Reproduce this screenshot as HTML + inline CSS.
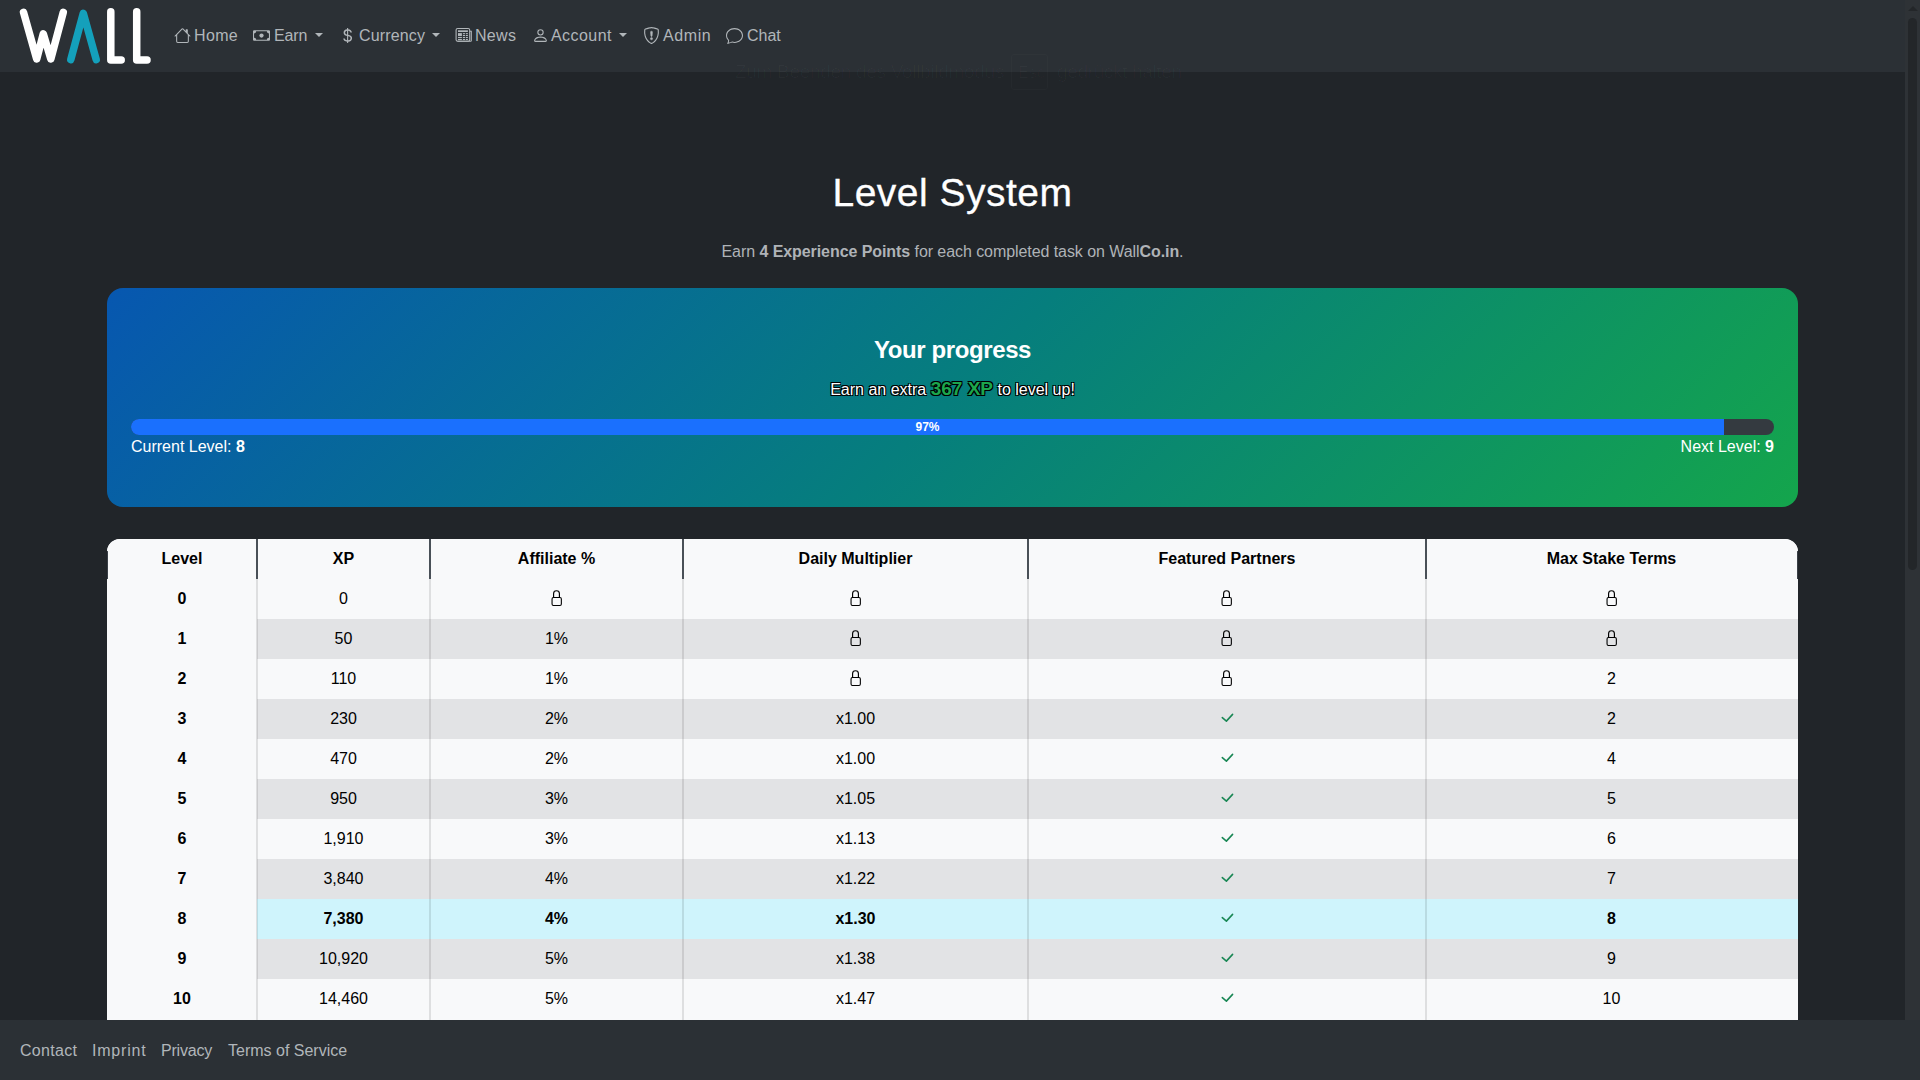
<!DOCTYPE html>
<html><head><meta charset="utf-8"><title>Level System</title>
<style>
*{box-sizing:border-box;margin:0;padding:0}
html,body{width:1920px;height:1080px;overflow:hidden;background:#212529;font-family:"Liberation Sans",sans-serif;color:#dee2e6}
.abs{position:absolute}
#nav{position:absolute;left:0;top:0;width:1905px;height:72px;background:#2b3035}
.nl{position:absolute;top:0;height:72px;line-height:72px;font-size:16px;color:#b1b6ba;white-space:nowrap}
.nl svg{position:absolute;fill:#b1b6ba}
.caret{position:absolute;width:0;height:0;border-left:4px solid transparent;border-right:4px solid transparent;border-top:4.5px solid #b1b6ba}
#title{position:absolute;left:0;width:1905px;top:167px;text-align:center;font-size:39px;line-height:52px;color:#fff;letter-spacing:0.5px;-webkit-text-stroke:0.3px #fff}
#sub{position:absolute;left:0;width:1905px;top:241px;text-align:center;font-size:16px;letter-spacing:-0.07px;line-height:22px;color:#afb3b7}
#sub b{font-weight:bold}
#card{position:absolute;left:107px;top:288px;width:1691px;height:219px;border-radius:16px;
 background:linear-gradient(135deg,#0757b0 0%,#067e7d 50%,#14a54c 100%)}
#yp{position:absolute;left:0;width:100%;top:47px;letter-spacing:-0.4px;text-align:center;font-size:24px;line-height:30px;font-weight:bold;color:#fff}
#ex{position:absolute;left:0;width:100%;top:90px;text-align:center;font-size:16px;line-height:22px;color:#fff;
 text-shadow:-1px -1px 0 #000,1px -1px 0 #000,-1px 1px 0 #000,1px 1px 0 #000}
#ex b{color:#1ca64c;font-size:19px}
#bar{position:absolute;left:24px;top:131px;width:1643px;height:16px;border-radius:8px;background:#343a40;overflow:hidden}
#fill{position:absolute;left:0;top:0;height:16px;width:1593px;background:#1a70fe;color:#fff;font-size:12px;font-weight:bold;text-align:center;line-height:16px}
#cur{position:absolute;left:24px;top:148px;font-size:16px;line-height:22px;color:#fff}
#nxt{position:absolute;right:24px;top:148px;font-size:16px;line-height:22px;color:#fff}
#tbl{position:absolute;left:107px;top:539px;width:1691px;height:520px;background:#f8f9fa;border-radius:13px 13px 0 0;overflow:hidden;color:#000}
.hd{position:absolute;left:0;top:0;width:1691px;height:40px;background:#f8f9fa;font-weight:bold;font-size:16px}
.row{position:absolute;left:0;width:1691px;height:40px;background:#f8f9fa;font-size:16px}
.row.st{background:#e2e3e5}
.row.hl{background:#cff4fc;font-weight:bold}
.c{position:absolute;top:0;height:40px;line-height:40px;text-align:center;white-space:nowrap}
.c.lv{background:#f8f9fa;font-weight:bold}
.c svg.lk{position:absolute;left:calc(50% - 6px);top:11px}
.c svg.ck{position:absolute;left:calc(50% - 6px);top:13.5px}
.hb{position:absolute;top:0;width:2px;height:40px;background:#495057}
.bb{position:absolute;top:0;width:2px;height:480px;background:rgba(0,0,0,0.1)}
#foot{position:absolute;left:0;top:1020px;width:1920px;z-index:5;height:60px;background:#2b3035}
.fl{position:absolute;top:1px;line-height:60px;font-size:16px;color:#b1b6ba}
#sb{position:absolute;left:1905px;top:0;width:15px;height:1020px;background:#2e3236}
#arr{position:absolute;left:2.5px;top:5.5px;width:0;height:0;border-left:5px solid transparent;border-right:5px solid transparent;border-bottom:5.5px solid #232629}
#thumb{position:absolute;left:3px;top:18px;width:9px;height:552px;border-radius:5px;background:#232629}
</style></head><body>
<div id="nav">
 <svg class="abs" style="left:16px;top:6px" width="140" height="62" viewBox="0 0 140 62">
  <g fill="none" stroke-linecap="round" stroke-linejoin="round" stroke-width="7.5">
   <path d="M7.5 6.3 L20.7 53 L27.3 27.8 L34.8 53 L47.3 6.3" stroke="#fff"/>
   <path d="M54.8 53.6 L67.3 7.3 L80.2 53.6" stroke="#14a0bb"/>
   <path d="M94.8 5.7 V54 H105.2" stroke="#fff"/>
   <path d="M120.7 5.7 V54 H131" stroke="#fff"/>
  </g>
 </svg>
 <div class="nl" style="left:174px">
  <svg style="left:0;top:26.5px" width="17" height="17" viewBox="0 0 16 16"><path d="M8.707 1.5a1 1 0 0 0-1.414 0L.646 8.146a.5.5 0 0 0 .708.708L2 8.207V13.5A1.5 1.5 0 0 0 3.5 15h9a1.5 1.5 0 0 0 1.5-1.5V8.207l.646.647a.5.5 0 0 0 .708-.708L13 5.793V2.5a.5.5 0 0 0-.5-.5h-1a.5.5 0 0 0-.5.5v1.293zM13 7.207V13.5a.5.5 0 0 1-.5.5h-9a.5.5 0 0 1-.5-.5V7.207l5-5z"/></svg>
  <span style="position:absolute;left:20px;letter-spacing:0.35px">Home</span>
 </div>
 <div class="nl" style="left:253px">
  <svg style="left:0;top:26.5px" width="17" height="17" viewBox="0 0 16 16"><path d="M8 10a2 2 0 1 0 0-4 2 2 0 0 0 0 4"/><path d="M0 4a1 1 0 0 1 1-1h14a1 1 0 0 1 1 1v8a1 1 0 0 1-1 1H1a1 1 0 0 1-1-1zm3 0a2 2 0 0 1-2 2v4a2 2 0 0 1 2 2h10a2 2 0 0 1 2-2V6a2 2 0 0 1-2-2z"/></svg>
  <span style="position:absolute;left:21px;letter-spacing:-0.1px">Earn</span>
  <div class="caret" style="left:62px;top:33px"></div>
 </div>
 <div class="nl" style="left:339px">
  <svg style="left:0;top:26.5px" width="17" height="17" viewBox="0 0 16 16"><path d="M4 10.781c.148 1.667 1.513 2.85 3.591 3.003V15h1.043v-1.216c2.27-.179 3.678-1.438 3.678-3.3 0-1.59-.947-2.51-2.956-3.028l-.722-.187V3.467c1.122.11 1.879.714 2.07 1.616h1.47c-.166-1.6-1.54-2.748-3.54-2.875V1H7.591v1.233c-1.939.23-3.27 1.472-3.27 3.156 0 1.454.966 2.483 2.661 2.917l.61.162v4.031c-1.149-.17-1.94-.8-2.131-1.718zm3.391-3.836c-1.043-.263-1.6-.825-1.6-1.616 0-.944.704-1.641 1.8-1.828v3.495l-.2-.05zm1.591 1.872c1.287.323 1.852.859 1.852 1.769 0 1.097-.826 1.828-2.2 1.939V8.73z"/></svg>
  <span style="position:absolute;left:20px;letter-spacing:0.15px">Currency</span>
  <div class="caret" style="left:93px;top:33px"></div>
 </div>
 <div class="nl" style="left:455px">
  <svg style="left:0;top:27px" width="17" height="17" viewBox="0 0 17 17"><g fill="none" stroke="#b1b6ba" stroke-width="1.1"><rect x="1.1" y="1.5" width="13.6" height="12.8" rx="1.6"/><path d="M14.7 4.2H16.3V13.5a0.8 0.8 0 0 1-0.8 0.8H2.5"/></g><g fill="#b1b6ba"><rect x="3" y="3.3" width="9.9" height="1.7"/><rect x="3" y="6.1" width="3.9" height="3"/><rect x="7.9" y="6.1" width="2.1" height="1.1"/><rect x="10.8" y="6.1" width="2.1" height="1.1"/><rect x="7.9" y="8" width="2.1" height="1.1"/><rect x="10.8" y="8" width="2.1" height="1.1"/><rect x="3" y="10" width="3.9" height="1.1"/><rect x="7.9" y="10" width="2.1" height="1.1"/><rect x="10.8" y="10" width="2.1" height="1.1"/><rect x="3" y="12" width="3.9" height="1.1"/><rect x="7.9" y="12" width="2.1" height="1.1"/><rect x="10.8" y="12" width="2.1" height="1.1"/></g></svg>
  <span style="position:absolute;left:20px;letter-spacing:0.3px">News</span>
 </div>
 <div class="nl" style="left:532px">
  <svg style="left:0;top:26.5px" width="17" height="17" viewBox="0 0 16 16"><path d="M8 8a3 3 0 1 0 0-6 3 3 0 0 0 0 6m2-3a2 2 0 1 1-4 0 2 2 0 0 1 4 0m4 8c0 1-1 1-1 1H3s-1 0-1-1 1-4 6-4 6 3 6 4m-1-.004c-.001-.246-.154-.986-.832-1.664C11.516 10.68 10.289 10 8 10s-3.516.68-4.168 1.332c-.678.678-.83 1.418-.832 1.664z"/></svg>
  <span style="position:absolute;left:19px;letter-spacing:0.45px">Account</span>
  <div class="caret" style="left:87px;top:33px"></div>
 </div>
 <div class="nl" style="left:643px">
  <svg style="left:0;top:26.5px" width="17" height="17" viewBox="0 0 16 16"><path d="M5.338 1.59a61 61 0 0 0-2.837.856.48.48 0 0 0-.328.39c-.554 4.157.726 7.19 2.253 9.188a10.7 10.7 0 0 0 2.287 2.233c.346.244.652.42.893.533q.18.085.293.118a1 1 0 0 0 .101.025 1 1 0 0 0 .1-.025q.114-.034.294-.118c.24-.113.547-.29.893-.533a10.7 10.7 0 0 0 2.287-2.233c1.527-1.997 2.807-5.031 2.253-9.188a.48.48 0 0 0-.328-.39c-.651-.213-1.75-.56-2.837-.855C9.552 1.290 8.531 1.067 8 1.067c-.53 0-1.552.223-2.662.524zM5.072.56C6.157.265 7.310 0 8 0s1.843.265 2.928.56c1.110.3 2.229.655 2.887.87a1.54 1.54 0 0 1 1.044 1.262c.596 4.477-.787 7.795-2.465 9.990a11.8 11.8 0 0 1-2.517 2.453 7 7 0 0 1-1.048.625c-.28.132-.581.24-.829.24s-.548-.108-.829-.24a7 7 0 0 1-1.048-.625 11.8 11.8 0 0 1-2.517-2.453C1.928 10.487.545 7.169 1.141 2.692A1.54 1.54 0 0 1 2.185 1.43 63 63 0 0 1 5.072.56"/><path d="M7.001 11a1 1 0 1 1 2 0 1 1 0 0 1-2 0M7.1 4.995a.905.905 0 1 1 1.8 0l-.35 3.507a.553.553 0 0 1-1.100 0z" stroke="#b1b6ba" stroke-width="0.5"/></svg>
  <span style="position:absolute;left:20px;letter-spacing:0.6px">Admin</span>
 </div>
 <div class="nl" style="left:726px">
  <svg style="left:0;top:26.5px" width="17" height="17" viewBox="0 0 16 16"><path d="M2.678 11.894a1 1 0 0 1 .287.801 11 11 0 0 1-.398 2c1.395-.323 2.247-.697 2.634-.893a1 1 0 0 1 .71-.074A8 8 0 0 0 8 14c3.996 0 7-2.807 7-6s-3.004-6-7-6-7 2.808-7 6c0 1.468.617 2.830 1.678 3.894m-.493 3.905a22 22 0 0 1-.713.129c-.2.032-.352-.176-.273-.362a10 10 0 0 0 .244-.637l.003-.010c.248-.72.45-1.548.524-2.319C.743 11.370 0 9.760 0 8c0-3.866 3.582-7 8-7s8 3.134 8 7-3.582 7-8 7a9 9 0 0 1-2.347-.306c-.52.263-1.639.742-3.468 1.105"/></svg>
  <span style="position:absolute;left:21px;letter-spacing:0px">Chat</span>
 </div>
</div>

<div style="position:absolute;left:0;top:0;width:1905px;height:100px;pointer-events:none;color:rgba(255,255,255,0.028);font-size:19px;line-height:22px;white-space:nowrap">
 <span id="fs1" style="position:absolute;left:735px;top:61px;letter-spacing:-0.3px">Zum Beenden des Vollbildmodus</span>
 <span style="position:absolute;left:1011px;top:54px;width:37px;height:36px;border:1px solid rgba(255,255,255,0.02);border-radius:3px"></span>
 <span id="fs2" style="position:absolute;left:1018px;top:62px;font-size:16px">Esc</span>
 <span id="fs3" style="position:absolute;left:1057px;top:61px;letter-spacing:-0.35px">gedrückt halten</span>
</div>
<div id="title">Level System</div>
<div id="sub">Earn <b>4 Experience Points</b> for each completed task on Wall<b>Co.in</b>.</div>

<div id="card">
 <div id="yp">Your progress</div>
 <div id="ex">Earn an extra <b>367 XP</b> to level up!</div>
 <div id="bar"><div id="fill">97%</div></div>
 <div id="cur">Current Level: <b>8</b></div>
 <div id="nxt">Next Level: <b>9</b></div>
</div>

<div id="tbl">
 <div class="hd"><div class="c" style="left:0px;width:150px">Level</div><div class="c" style="left:151px;width:171px">XP</div><div class="c" style="left:324px;width:251px">Affiliate %</div><div class="c" style="left:577px;width:343px">Daily Multiplier</div><div class="c" style="left:922px;width:396px">Featured Partners</div><div class="c" style="left:1320px;width:369px">Max Stake Terms</div><div class="hb" style="left:149px"></div><div class="hb" style="left:322px"></div><div class="hb" style="left:575px"></div><div class="hb" style="left:920px"></div><div class="hb" style="left:1318px"></div><div style="position:absolute;left:0;top:12px;width:1px;height:28px;background:#3a4047"></div><div style="position:absolute;right:0;top:12px;width:1px;height:28px;background:#3a4047"></div></div>
 <div style="position:absolute;left:0;top:40px;width:1691px;height:480px"><div class="row" style="top:0px"><div class="c lv" style="left:0px;width:150px">0</div><div class="c" style="left:151px;width:171px">0</div><div class="c" style="left:324px;width:251px"><svg class="lk" width="12" height="17" viewBox="0 0 12 17"><path d="M2.6 7.6V3.6a2.9 2.9 0 0 1 5.8 0V7.6" fill="none" stroke="#000" stroke-width="1.15"/><rect x="1.05" y="7.5" width="9.3" height="8" rx="1.4" fill="none" stroke="#000" stroke-width="1.1"/></svg></div><div class="c" style="left:577px;width:343px"><svg class="lk" width="12" height="17" viewBox="0 0 12 17"><path d="M2.6 7.6V3.6a2.9 2.9 0 0 1 5.8 0V7.6" fill="none" stroke="#000" stroke-width="1.15"/><rect x="1.05" y="7.5" width="9.3" height="8" rx="1.4" fill="none" stroke="#000" stroke-width="1.1"/></svg></div><div class="c" style="left:922px;width:396px"><svg class="lk" width="12" height="17" viewBox="0 0 12 17"><path d="M2.6 7.6V3.6a2.9 2.9 0 0 1 5.8 0V7.6" fill="none" stroke="#000" stroke-width="1.15"/><rect x="1.05" y="7.5" width="9.3" height="8" rx="1.4" fill="none" stroke="#000" stroke-width="1.1"/></svg></div><div class="c" style="left:1320px;width:369px"><svg class="lk" width="12" height="17" viewBox="0 0 12 17"><path d="M2.6 7.6V3.6a2.9 2.9 0 0 1 5.8 0V7.6" fill="none" stroke="#000" stroke-width="1.15"/><rect x="1.05" y="7.5" width="9.3" height="8" rx="1.4" fill="none" stroke="#000" stroke-width="1.1"/></svg></div></div>
<div class="row st" style="top:40px"><div class="c lv" style="left:0px;width:150px">1</div><div class="c" style="left:151px;width:171px">50</div><div class="c" style="left:324px;width:251px">1%</div><div class="c" style="left:577px;width:343px"><svg class="lk" width="12" height="17" viewBox="0 0 12 17"><path d="M2.6 7.6V3.6a2.9 2.9 0 0 1 5.8 0V7.6" fill="none" stroke="#000" stroke-width="1.15"/><rect x="1.05" y="7.5" width="9.3" height="8" rx="1.4" fill="none" stroke="#000" stroke-width="1.1"/></svg></div><div class="c" style="left:922px;width:396px"><svg class="lk" width="12" height="17" viewBox="0 0 12 17"><path d="M2.6 7.6V3.6a2.9 2.9 0 0 1 5.8 0V7.6" fill="none" stroke="#000" stroke-width="1.15"/><rect x="1.05" y="7.5" width="9.3" height="8" rx="1.4" fill="none" stroke="#000" stroke-width="1.1"/></svg></div><div class="c" style="left:1320px;width:369px"><svg class="lk" width="12" height="17" viewBox="0 0 12 17"><path d="M2.6 7.6V3.6a2.9 2.9 0 0 1 5.8 0V7.6" fill="none" stroke="#000" stroke-width="1.15"/><rect x="1.05" y="7.5" width="9.3" height="8" rx="1.4" fill="none" stroke="#000" stroke-width="1.1"/></svg></div></div>
<div class="row" style="top:80px"><div class="c lv" style="left:0px;width:150px">2</div><div class="c" style="left:151px;width:171px">110</div><div class="c" style="left:324px;width:251px">1%</div><div class="c" style="left:577px;width:343px"><svg class="lk" width="12" height="17" viewBox="0 0 12 17"><path d="M2.6 7.6V3.6a2.9 2.9 0 0 1 5.8 0V7.6" fill="none" stroke="#000" stroke-width="1.15"/><rect x="1.05" y="7.5" width="9.3" height="8" rx="1.4" fill="none" stroke="#000" stroke-width="1.1"/></svg></div><div class="c" style="left:922px;width:396px"><svg class="lk" width="12" height="17" viewBox="0 0 12 17"><path d="M2.6 7.6V3.6a2.9 2.9 0 0 1 5.8 0V7.6" fill="none" stroke="#000" stroke-width="1.15"/><rect x="1.05" y="7.5" width="9.3" height="8" rx="1.4" fill="none" stroke="#000" stroke-width="1.1"/></svg></div><div class="c" style="left:1320px;width:369px">2</div></div>
<div class="row st" style="top:120px"><div class="c lv" style="left:0px;width:150px">3</div><div class="c" style="left:151px;width:171px">230</div><div class="c" style="left:324px;width:251px">2%</div><div class="c" style="left:577px;width:343px">x1.00</div><div class="c" style="left:922px;width:396px"><svg class="ck" width="13" height="10" viewBox="0 0 13 10"><path d="M1.3 4.6L5.4 8.1 11.6 1.4" fill="none" stroke="#198754" stroke-width="1.55" stroke-linecap="round" stroke-linejoin="round"/></svg></div><div class="c" style="left:1320px;width:369px">2</div></div>
<div class="row" style="top:160px"><div class="c lv" style="left:0px;width:150px">4</div><div class="c" style="left:151px;width:171px">470</div><div class="c" style="left:324px;width:251px">2%</div><div class="c" style="left:577px;width:343px">x1.00</div><div class="c" style="left:922px;width:396px"><svg class="ck" width="13" height="10" viewBox="0 0 13 10"><path d="M1.3 4.6L5.4 8.1 11.6 1.4" fill="none" stroke="#198754" stroke-width="1.55" stroke-linecap="round" stroke-linejoin="round"/></svg></div><div class="c" style="left:1320px;width:369px">4</div></div>
<div class="row st" style="top:200px"><div class="c lv" style="left:0px;width:150px">5</div><div class="c" style="left:151px;width:171px">950</div><div class="c" style="left:324px;width:251px">3%</div><div class="c" style="left:577px;width:343px">x1.05</div><div class="c" style="left:922px;width:396px"><svg class="ck" width="13" height="10" viewBox="0 0 13 10"><path d="M1.3 4.6L5.4 8.1 11.6 1.4" fill="none" stroke="#198754" stroke-width="1.55" stroke-linecap="round" stroke-linejoin="round"/></svg></div><div class="c" style="left:1320px;width:369px">5</div></div>
<div class="row" style="top:240px"><div class="c lv" style="left:0px;width:150px">6</div><div class="c" style="left:151px;width:171px">1,910</div><div class="c" style="left:324px;width:251px">3%</div><div class="c" style="left:577px;width:343px">x1.13</div><div class="c" style="left:922px;width:396px"><svg class="ck" width="13" height="10" viewBox="0 0 13 10"><path d="M1.3 4.6L5.4 8.1 11.6 1.4" fill="none" stroke="#198754" stroke-width="1.55" stroke-linecap="round" stroke-linejoin="round"/></svg></div><div class="c" style="left:1320px;width:369px">6</div></div>
<div class="row st" style="top:280px"><div class="c lv" style="left:0px;width:150px">7</div><div class="c" style="left:151px;width:171px">3,840</div><div class="c" style="left:324px;width:251px">4%</div><div class="c" style="left:577px;width:343px">x1.22</div><div class="c" style="left:922px;width:396px"><svg class="ck" width="13" height="10" viewBox="0 0 13 10"><path d="M1.3 4.6L5.4 8.1 11.6 1.4" fill="none" stroke="#198754" stroke-width="1.55" stroke-linecap="round" stroke-linejoin="round"/></svg></div><div class="c" style="left:1320px;width:369px">7</div></div>
<div class="row hl" style="top:320px"><div class="c lv" style="left:0px;width:150px">8</div><div class="c" style="left:151px;width:171px">7,380</div><div class="c" style="left:324px;width:251px">4%</div><div class="c" style="left:577px;width:343px">x1.30</div><div class="c" style="left:922px;width:396px"><svg class="ck" width="13" height="10" viewBox="0 0 13 10"><path d="M1.3 4.6L5.4 8.1 11.6 1.4" fill="none" stroke="#198754" stroke-width="1.55" stroke-linecap="round" stroke-linejoin="round"/></svg></div><div class="c" style="left:1320px;width:369px">8</div></div>
<div class="row st" style="top:360px"><div class="c lv" style="left:0px;width:150px">9</div><div class="c" style="left:151px;width:171px">10,920</div><div class="c" style="left:324px;width:251px">5%</div><div class="c" style="left:577px;width:343px">x1.38</div><div class="c" style="left:922px;width:396px"><svg class="ck" width="13" height="10" viewBox="0 0 13 10"><path d="M1.3 4.6L5.4 8.1 11.6 1.4" fill="none" stroke="#198754" stroke-width="1.55" stroke-linecap="round" stroke-linejoin="round"/></svg></div><div class="c" style="left:1320px;width:369px">9</div></div>
<div class="row" style="top:400px"><div class="c lv" style="left:0px;width:150px">10</div><div class="c" style="left:151px;width:171px">14,460</div><div class="c" style="left:324px;width:251px">5%</div><div class="c" style="left:577px;width:343px">x1.47</div><div class="c" style="left:922px;width:396px"><svg class="ck" width="13" height="10" viewBox="0 0 13 10"><path d="M1.3 4.6L5.4 8.1 11.6 1.4" fill="none" stroke="#198754" stroke-width="1.55" stroke-linecap="round" stroke-linejoin="round"/></svg></div><div class="c" style="left:1320px;width:369px">10</div></div><div class="bb" style="left:149px"></div><div class="bb" style="left:322px"></div><div class="bb" style="left:575px"></div><div class="bb" style="left:920px"></div><div class="bb" style="left:1318px"></div></div>
</div>

<div id="foot">
 <div class="fl" style="left:20px;letter-spacing:0.3px">Contact</div>
 <div class="fl" style="left:92px;letter-spacing:0.8px">Imprint</div>
 <div class="fl" style="left:161px;letter-spacing:-0.2px">Privacy</div>
 <div class="fl" style="left:228px">Terms of Service</div>
</div>
<div id="sb"><div id="arr"></div><div id="thumb"></div></div>
</body></html>
